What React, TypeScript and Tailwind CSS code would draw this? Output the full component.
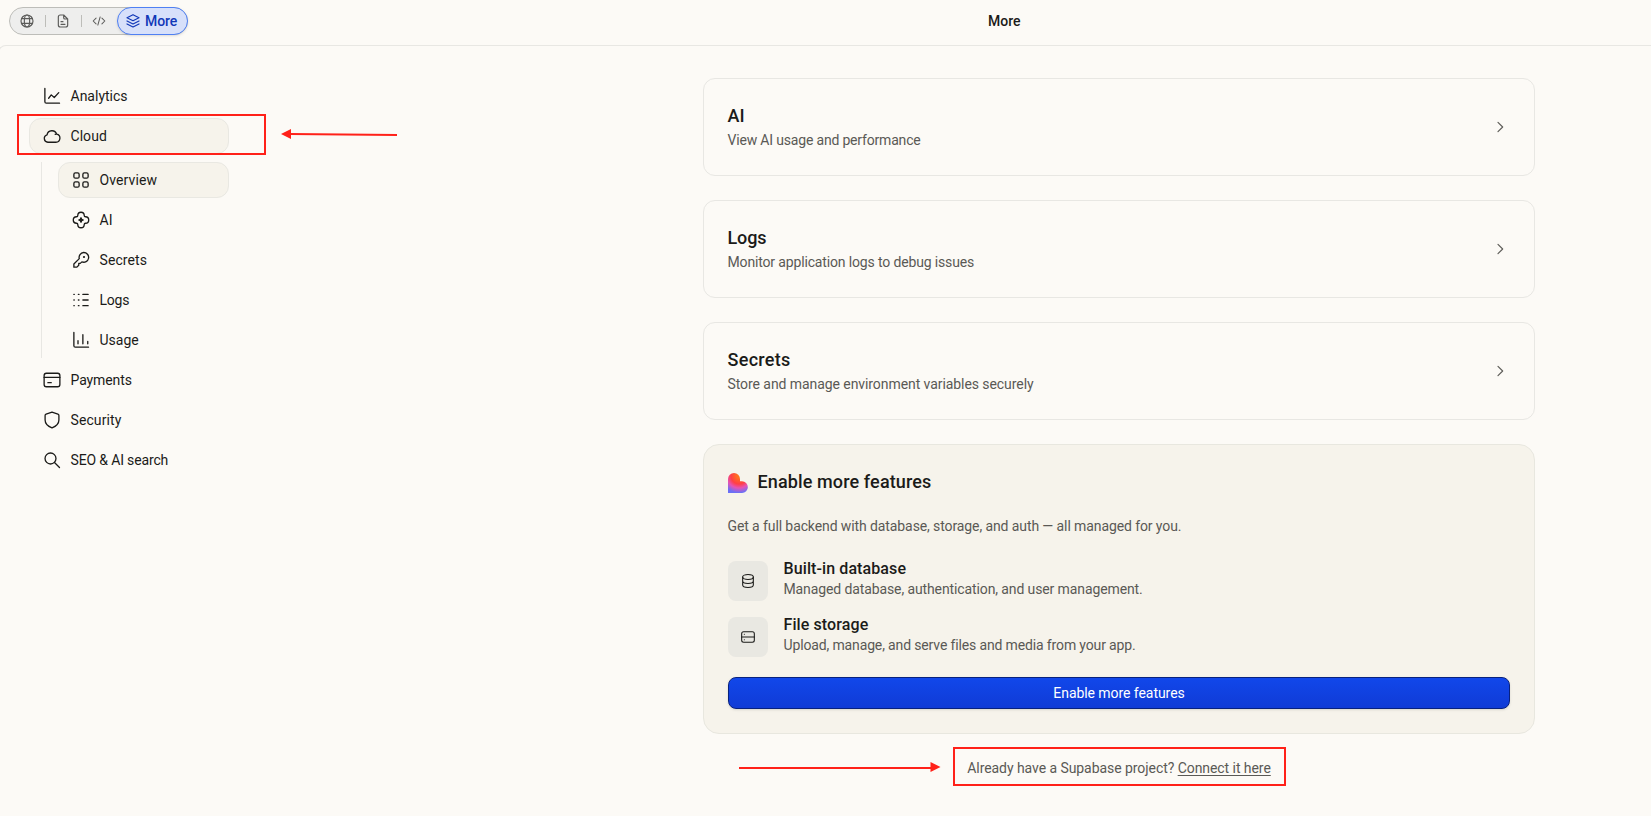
import React from 'react';

interface IconProps {
    size?: number;
    children: React.ReactNode;
    strokeWidth?: number;
    className?: string;
}

const Icon: React.FC<IconProps> = ({ size = 18, strokeWidth = 1.75, className = '', children }) => (
    <svg
        width={size}
        height={size}
        viewBox="0 0 24 24"
        fill="none"
        stroke="currentColor"
        strokeWidth={strokeWidth}
        strokeLinecap="round"
        strokeLinejoin="round"
        className={`shrink-0 ${className}`}
    >
        {children}
    </svg>
);

const icons = {
    globe: (
        <>
            <circle cx="12" cy="12" r="9" />
            <ellipse cx="12" cy="12" rx="4" ry="9" />
            <path d="M4 8.5h16M4 15.5h16" />
        </>
    ),
    file: (
        <>
            <path d="M13 3H8a3 3 0 0 0-3 3v12a3 3 0 0 0 3 3h8a3 3 0 0 0 3-3V9zM13 3v4a2 2 0 0 0 2 2h4" />
            <path d="M9 13h3M9 17h6" />
        </>
    ),
    code: <path d="M7 7l-5 5 5 5M17 7l5 5-5 5M14 5l-4 14" />,
    layers: (
        <>
            <path d="M12 2.500L3 7l9 4.500L21 7z" />
            <path d="M3 12l9 4.500 9-4.500" />
            <path d="M3 16.500l9 4.500 9-4.500" />
        </>
    ),
    analytics: <path d="M2.500 2v17.500a2 2 0 0 0 2 2H22M7.500 15l3.500-4.500 4 3.500L21 7.500" />,
    cloud: <path d="M6.500 20.300A5 5 0 0 1 5.400 10.500A6.600 6.600 0 0 1 18.200 9.600A5.400 5.400 0 0 1 17.200 20.300H6.500M18.200 9.600q-1-.2-2 .2" />,
    grid: (
        <>
            <rect x="2.500" y="2.500" width="7" height="7" rx="2" />
            <rect x="14.500" y="2.500" width="7" height="7" rx="2" />
            <rect x="2.500" y="14.500" width="7" height="7" rx="2" />
            <rect x="14.500" y="14.500" width="7" height="7" rx="2" />
        </>
    ),
    ai: (
        <>
            <path d="M7.700 6a4.300 4.300 0 0 1 8.600 0q0 1.700 1.700 1.700a4.300 4.300 0 0 1 0 8.600q-1.700 0-1.700 1.700a4.300 4.300 0 0 1-8.600 0q0-1.700-1.700-1.700a4.300 4.300 0 0 1 0-8.600q1.700 0 1.700-1.700z" />
            <path d="M12 9l.9 2.100L15 12l-2.100.9L12 15l-.9-2.100L9 12l2.100-.9z" fill="currentColor" />
        </>
    ),
    key: (
        <>
            <path d="M15.500 2a6.500 6.500 0 1 1-2.300 12.500L11 16.500H9V19l-2.500 2.500H2.500v-4.200l7.200-7.100A6.500 6.500 0 0 1 15.500 2z" />
            <circle cx="16" cy="8" r=".6" fill="currentColor" />
        </>
    ),
    logs: (
        <path d="M2.500 4.500h.5M8.500 4.500h.8M14.500 4.500h7M2.500 12h.5M8.500 12h.8M14.500 12h7M2.500 19.500h.5M8.500 19.500h.8M14.500 19.500h7" />
    ),
    usage: <path d="M2.500 2v17.500a2 2 0 0 0 2 2H22M8 17v-4M14.500 17V5M21 17v-3" />,
    card: (
        <>
            <rect x="1.500" y="3" width="21" height="18" rx="3" />
            <path d="M1.500 8.500h21M6.500 15.500H11" />
        </>
    ),
    shield: <path d="M12 1.500l7.900 2.700a2 2 0 0 1 1.300 1.900V12c0 5-3.900 8.400-9.200 10.600C6.700 20.400 2.800 17 2.800 12V6.100a2 2 0 0 1 1.300-1.900z" />,
    search: (
        <>
            <circle cx="10" cy="10" r="7.300" />
            <path d="M15.300 15.300L22 22" />
        </>
    ),
    chevron: <path d="M9 5l7 7-7 7" />,
    database: (
        <>
            <ellipse cx="12" cy="6" rx="8" ry="3.700" />
            <path d="M4 6v12c0 2 3.600 3.700 8 3.700s8-1.700 8-3.700V6M4 12c0 2 3.600 3.700 8 3.700s8-1.700 8-3.700" />
        </>
    ),
    storage: (
        <>
            <rect x="2.500" y="4" width="19" height="16" rx="3" />
            <path d="M2.500 12h19M6.500 8h.1M6.500 16h.1" />
        </>
    ),
};

interface NavItemProps {
    icon: React.ReactNode;
    label: string;
    active?: boolean;
    tracking?: string;
}

const NavItem: React.FC<NavItemProps> = ({ icon, label, active, tracking = 'tracking-normal' }) => (
    <button
        className={`flex h-9 w-full items-center gap-[9.5px] rounded-xl border pl-[13px] text-left text-sm ${tracking} ${
            active ? 'border-[#e9e8e2] bg-[#f6f3eb]' : 'border-transparent'
        }`}
    >
        <Icon>{icon}</Icon>
        {label}
    </button>
);

interface TextBlockProps {
    title: string;
    description: string;
    titleTracking?: string;
    tracking?: string;
}

const LinkCard: React.FC<TextBlockProps> = ({ title, description, titleTracking = '', tracking = '' }) => (
    <div className="flex h-[98px] items-center justify-between rounded-xl border border-[#e8e7e3] px-6">
        <div className="-mt-0.5 -ml-[0.5px]">
            <h2 className={`text-lg leading-7 font-medium ${titleTracking}`}>{title}</h2>
            <p className={`text-sm leading-5 text-[#5a5955] ${tracking}`}>{description}</p>
        </div>
        <Icon size={16} strokeWidth={1.8} className="mr-0.5 text-[#5f5e5a]">{icons.chevron}</Icon>
    </div>
);

const Feature: React.FC<TextBlockProps & { icon: React.ReactNode }> = ({ icon, title, description, tracking = '' }) => (
    <div className="flex h-11 gap-[15.5px]">
        <div className="mt-1 flex size-10 items-center justify-center rounded-lg bg-[#e9e8e2]">
            <Icon size={16} strokeWidth={1.6}>{icon}</Icon>
        </div>
        <div>
            <h3 className="text-base leading-6 font-medium tracking-[0.1px]">{title}</h3>
            <p className={`-mt-0.5 text-sm leading-5 text-[#5a5955] ${tracking}`}>{description}</p>
        </div>
    </div>
);

const Logo: React.FC = () => (
    <svg width="20" height="20" viewBox="0 0 20 20">
        <defs>
            <radialGradient id="heart" cx="11" cy="3" r="20" gradientUnits="userSpaceOnUse">
                <stop offset="0.1" stopColor="#ff6f20" />
                <stop offset="0.4" stopColor="#ff3f45" />
                <stop offset="0.6" stopColor="#e653b4" />
                <stop offset="0.84" stopColor="#6b6ff5" />
            </radialGradient>
        </defs>
        <path d="M0 6a6 6 0 0 1 12 0v2.300h2a5.850 5.850 0 0 1 0 11.700H0z" fill="url(#heart)" />
    </svg>
);

const App: React.FC = () => {
    return (
        <div className="relative h-[816px] w-full overflow-hidden bg-[#fcfaf6] font-['Roboto',sans-serif] text-[#1b1b19]">
            <header className="flex h-[45px] items-start">
                <div className="mt-[7px] ml-[9px] flex h-7 w-[179px] items-center rounded-full border border-[#bdbdb9] bg-[#eeeeed] pl-[9px] text-[#5c5c5a]">
                    <Icon size={16}>{icons.globe}</Icon>
                    <span className="ml-2.5 h-3 w-px bg-[#bdbdb9]" />
                    <Icon size={16} className="ml-[9px]">{icons.file}</Icon>
                    <span className="ml-2.5 h-3 w-px bg-[#bdbdb9]" />
                    <Icon size={14} className="ml-2.5">{icons.code}</Icon>
                    <div className="ml-[11px] -mr-px flex h-7 w-[71px] shrink-0 items-center gap-1 rounded-full border border-[#4f80f3] bg-[#d7e0fa] pl-[7px] text-sm font-medium tracking-[-0.1px] text-[#1238b8] shadow-sm">
                        <Icon size={16} strokeWidth={1.8}>{icons.layers}</Icon>
                        More
                    </div>
                </div>
                <h1 className="mt-[11px] ml-[800px] text-sm leading-5 font-medium">More</h1>
            </header>

            <main className="-ml-0.5 flex h-[780px] rounded-tl-lg border-t border-l border-[#e8e7e3]">
                <nav className="mt-8 ml-[30px] flex w-[200px] flex-col gap-1">
                    <NavItem icon={icons.analytics} label="Analytics" />
                    <NavItem icon={icons.cloud} label="Cloud" active tracking="tracking-[0.05px]" />
                    <div className="mt-1 ml-3 flex h-[196px] flex-col gap-1 border-l border-[#e8e7e3] pl-4">
                        <NavItem icon={icons.grid} label="Overview" active tracking="tracking-[0.1px]" />
                        <NavItem icon={icons.ai} label="AI" />
                        <NavItem icon={icons.key} label="Secrets" tracking="tracking-[0.1px]" />
                        <NavItem icon={icons.logs} label="Logs" tracking="tracking-[-0.2px]" />
                        <NavItem icon={icons.usage} label="Usage" />
                    </div>
                    <NavItem icon={icons.card} label="Payments" tracking="tracking-[-0.1px]" />
                    <NavItem icon={icons.shield} label="Security" tracking="tracking-[0.1px]" />
                    <NavItem icon={icons.search} label="SEO & AI search" tracking="tracking-[-0.15px]" />
                </nav>

                <section className="mt-8 ml-[474px] flex w-[832px] flex-col gap-6">
                    <LinkCard title="AI" description="View AI usage and performance" tracking="tracking-[-0.18px]" />
                    <LinkCard
                        title="Logs"
                        description="Monitor application logs to debug issues"
                        titleTracking="tracking-[-0.1px]"
                        tracking="tracking-[-0.15px]"
                    />
                    <LinkCard
                        title="Secrets"
                        description="Store and manage environment variables securely"
                        titleTracking="tracking-[0.3px]"
                        tracking="tracking-[-0.07px]"
                    />

                    <div className="flex h-[290px] flex-col rounded-2xl border border-[#e8e7df] bg-[#f6f3eb] p-6">
                        <div className="flex h-7 items-center gap-[9.5px]">
                            <Logo />
                            <h2 className="-mt-0.5 text-lg leading-7 font-medium tracking-[0.12px]">Enable more features</h2>
                        </div>
                        <p className="mt-[19px] mb-[21px] -ml-[0.5px] text-sm leading-5 tracking-[-0.1px] text-[#5a5955]">
                            Get a full backend with database, storage, and auth — all managed for you.
                        </p>
                        <div className="flex flex-col gap-3">
                            <Feature
                                icon={icons.database}
                                title="Built-in database"
                                description="Managed database, authentication, and user management."
                                tracking="tracking-[-0.11px]"
                            />
                            <Feature
                                icon={icons.storage}
                                title="File storage"
                                description="Upload, manage, and serve files and media from your app."
                                tracking="tracking-[-0.14px]"
                            />
                        </div>
                        <button className="mt-5 h-8 shrink-0 rounded-lg border border-[#08217e] bg-linear-to-b from-[#1147ea] to-[#103bd6] text-sm tracking-[-0.06px] text-white shadow-sm">
                            Enable more features
                        </button>
                    </div>

                    <p className="text-center text-sm leading-5 tracking-[-0.06px] text-[#5a5955]">
                        Already have a Supabase project? <a className="underline underline-offset-2">Connect it here</a>
                    </p>
                </section>
            </main>

            {/* callouts */}
            <div className="absolute top-[114px] left-[17px] h-[41px] w-[249px] border-2 border-[#ff2119]" />
            <svg className="absolute top-[128px] left-[280px]" width="120" height="14" fill="#ff2119">
                <path d="M1 6l10-5v10z" />
                <path d="M10 6l107 1" stroke="#ff2119" strokeWidth="2" />
            </svg>
            <div className="absolute top-[747px] left-[953px] h-[39px] w-[333px] border-2 border-[#ff2119]" />
            <svg className="absolute top-[761px] left-[739px]" width="203" height="14" fill="#ff2119">
                <path d="M201.500 6l-10-5v10z" />
                <path d="M0 7h193" stroke="#ff2119" strokeWidth="2" />
            </svg>
        </div>
    );
};

export default App;
